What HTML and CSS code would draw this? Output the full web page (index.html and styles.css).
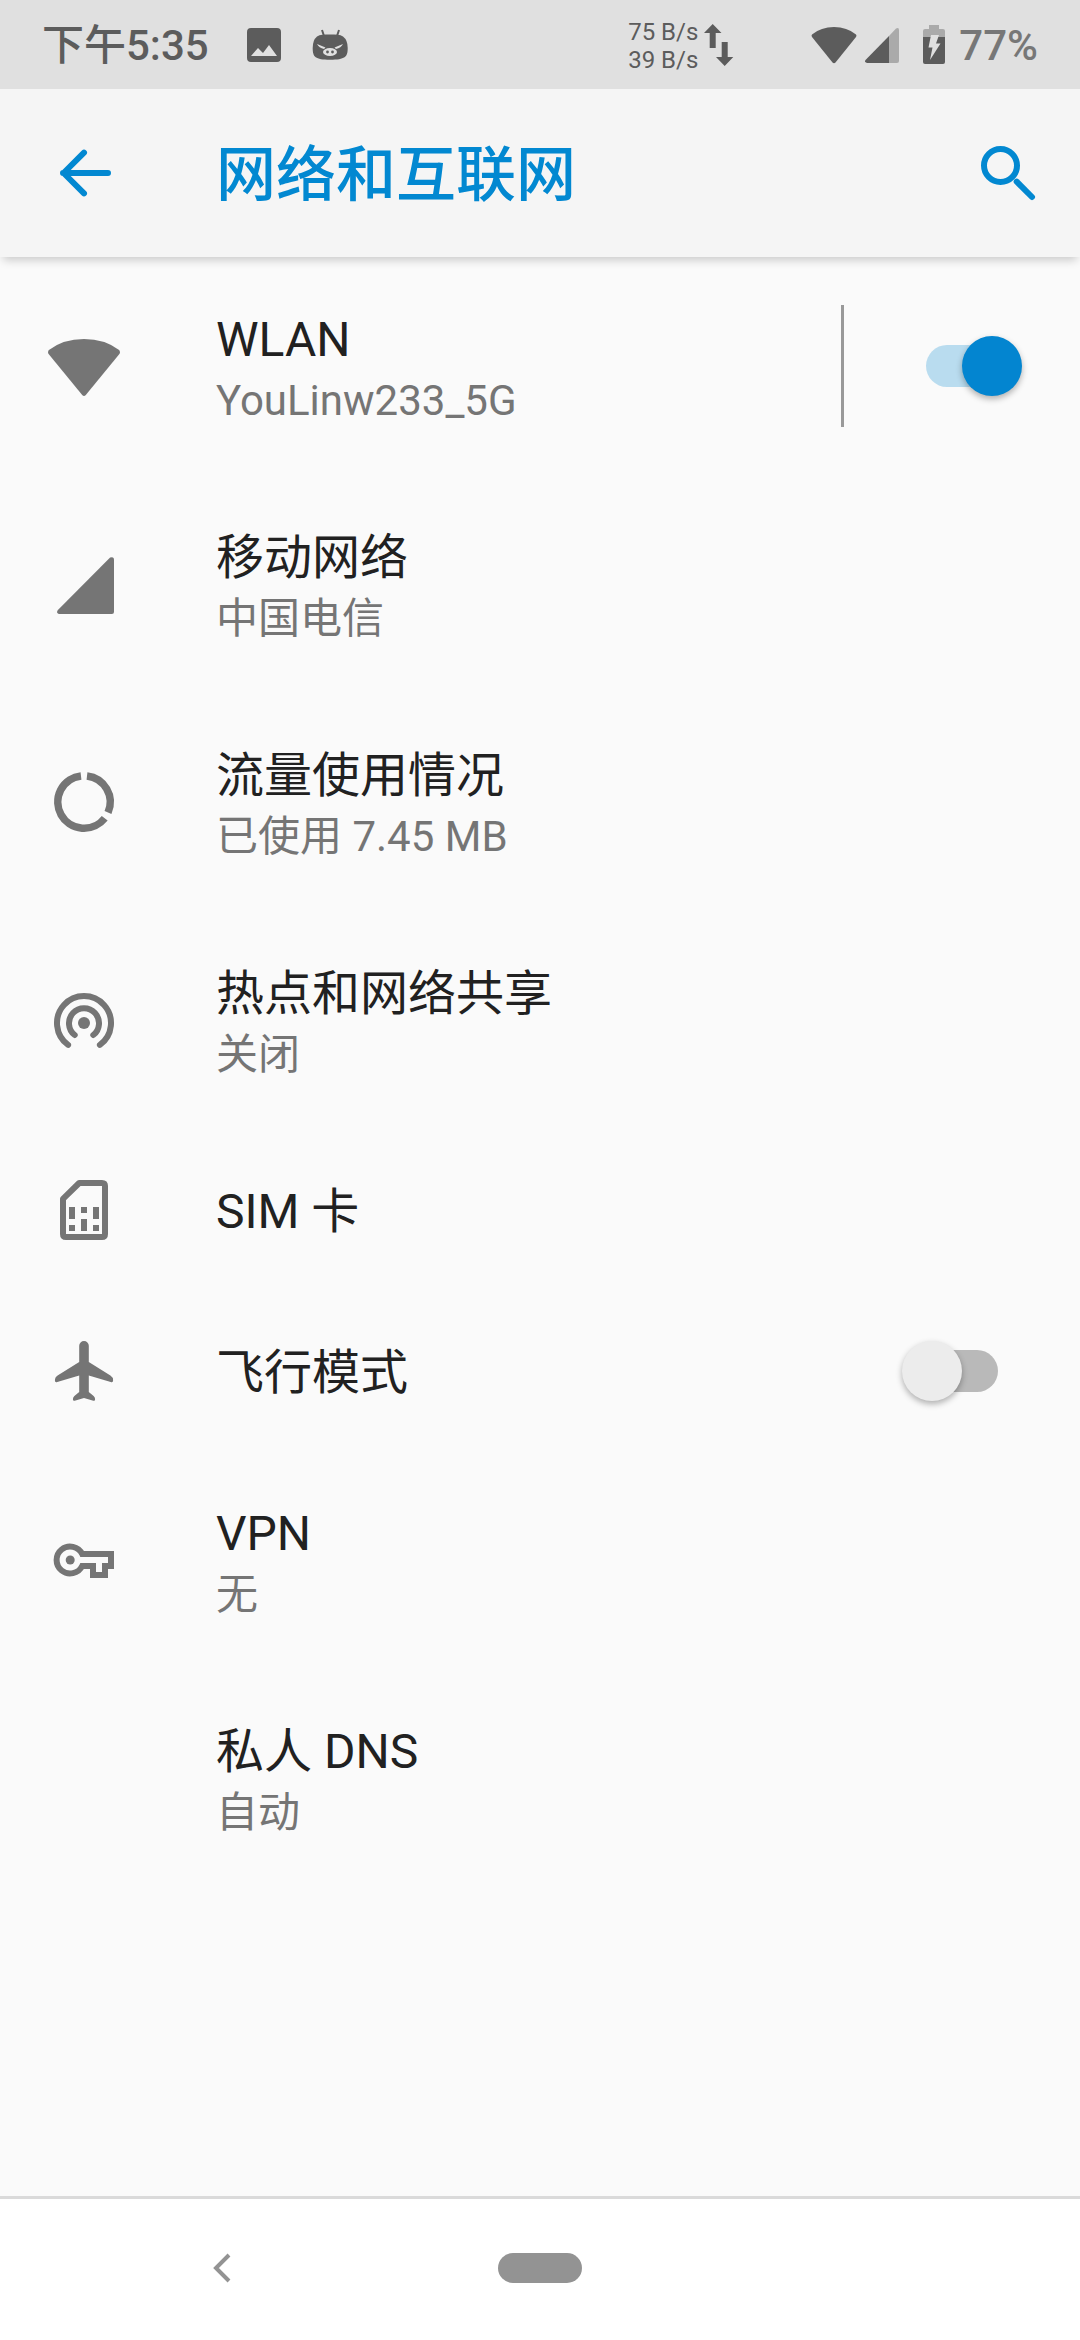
FILE: index.html
```html
<!DOCTYPE html>
<html lang="zh-CN">
<head>
<meta charset="utf-8">
<meta name="viewport" content="width=device-width">
<title>网络和互联网</title>
<link rel="stylesheet" href="styles.css">
</head>
<body>
<div class="status">
  <span class="clock">下午5:35</span>
  <svg class="status-image" viewBox="0 0 34 34" width="34" height="34" aria-hidden="true"><path fill-rule="evenodd" d="M4 0H30a4 4 0 0 1 4 4V30a4 4 0 0 1-4 4H4a4 4 0 0 1-4-4V4a4 4 0 0 1 4-4ZM4 28H30L22 17L16 25L11 20Z"/></svg>
  <svg class="status-pig" viewBox="0 0 36 32" width="36" height="32" aria-hidden="true">
    <path d="M10 1l2 6M27 1l-2 6" class="pig-ear"/>
    <path d="M18 5.500C24 5.500 28 5.500 31 7.500Q35.700 11 35.700 19C35.700 28 33 30.700 18 30.700S.7 28 .7 19Q.7 11 5 7.500C8 5.500 12 5.500 18 5.500Z"/>
    <path class="pig-cut" d="M5 15L13.500 18.500L12 20Q7 19 5 15ZM31 15L22.500 18.500L24 20Q29 19 31 15Z"/>
    <ellipse class="pig-cut" cx="18" cy="23" rx="7" ry="4"/>
    <circle cx="15.500" cy="23" r="1.400"/><circle cx="20.500" cy="23" r="1.400"/>
  </svg>
  <div class="speed"><span>75 B/s</span><span>39 B/s</span></div>
  <svg class="status-arrows" viewBox="0 0 30 42" width="30" height="42" aria-hidden="true"><path d="M8.700 0L17.500 9H11.700V24H5.700V9H0ZM20.700 42L12 33H17.700V18H23.700V33H29.300Z"/></svg>
  <svg class="status-wifi" viewBox="0 0 46 38" width="46" height="38" aria-hidden="true"><path d="M1 8.500Q10 1 23 1T45 8.500Q46 9.500 45 11L24.500 36.500Q23 38 21.500 36.500L1 11Q0 9.500 1 8.500Z"/></svg>
  <svg class="status-signal" viewBox="0 0 34 36" width="34" height="36" aria-hidden="true"><path class="faint" d="M24 9L31 1.500Q34 0 34 3V34Q34 36 32 36H24Z"/><path d="M24 9V36H2Q-1 35 .5 33Z"/></svg>
  <svg class="status-battery" viewBox="0 0 22 39" width="22" height="39" aria-hidden="true"><path class="faint" d="M6 0H16V4H20Q22 4 22 6V12H0V6Q0 4 2 4H6Z"/><path d="M0 12H22V37Q22 39 20 39H2Q0 39 0 37Z"/><path class="bolt" d="M8 10H16L13 18.500H17.500L7 35L9.500 22.500H5.500Z"/></svg>
  <span class="percent">77%</span>
</div>

<header class="appbar">
  <button class="icon-button" type="button" aria-label="返回"><svg viewBox="0 0 24 24" width="72" height="72"><path class="line" d="M20 12H5M12 5.200L5.200 12L12 18.800"/></svg></button>
  <h1>网络和互联网</h1>
  <button class="icon-button" type="button" aria-label="搜索"><svg viewBox="0 0 24 24" width="72" height="72"><circle class="line" cx="9.500" cy="9.500" r="5.500"/><path class="line" d="M14.900 14.900L20 20"/></svg></button>
</header>

<main>
  <ul class="list">
    <li class="row">
      <a class="entry" href="#wlan">
        <svg viewBox="0 0 24 24" width="72" height="72" aria-hidden="true"><path d="M.3 6.700Q5 3 12 3T23.700 6.700Q24.200 7.300 23.800 8L12.600 21.700Q12 22.300 11.400 21.700L.2 8Q-.2 7.300.3 6.700Z"/></svg>
        <span class="text"><span class="title">WLAN</span><span class="sub">YouLinw233_5G</span></span>
      </a>
      <div class="toggle-area split"><input class="switch" type="checkbox" role="switch" aria-label="WLAN" checked></div>
    </li>
    <li class="row">
      <a class="entry" href="#mobile">
        <svg viewBox="0 0 24 24" width="72" height="72" aria-hidden="true"><path d="M20.700 3.200Q22 2.700 22 4V21.300Q22 22 21.300 22H3.600Q2.600 21.700 3.300 20.700Z"/></svg>
        <span class="text"><span class="title">移动网络</span><span class="sub">中国电信</span></span>
      </a>
    </li>
    <li class="row">
      <a class="entry" href="#data">
        <svg viewBox="0 0 24 24" width="72" height="72" aria-hidden="true"><path class="line ring" d="M13 3.310A8.750 8.750 0 0 1 20 15.500M18.900 17.400A8.750 8.750 0 1 1 11 3.310"/></svg>
        <span class="text"><span class="title">流量使用情况</span><span class="sub">已使用 7.45 MB</span></span>
      </a>
    </li>
    <li class="row">
      <a class="entry" href="#hotspot">
        <svg viewBox="0 0 24 24" width="72" height="72" aria-hidden="true"><path class="line" d="M6.700 20.300A9 9 0 1 1 17.300 20.300M8.900 17A5 5 0 1 1 15.100 17"/><circle cx="12" cy="13" r="2"/></svg>
        <span class="text"><span class="title">热点和网络共享</span><span class="sub">关闭</span></span>
      </a>
    </li>
    <li class="row single">
      <a class="entry" href="#sim">
        <svg viewBox="0 0 24 24" width="72" height="72" aria-hidden="true"><path class="line" d="M10.400 3H18Q19 3 19 4V20Q19 21 18 21H6Q5 21 5 20V8.300Z"/><path d="M7 11h2v4H7ZM7 17h2v2H7ZM11 11h2v2H11ZM11 15h2v4H11ZM15 11h2v4H15ZM15 17h2v2H15Z"/></svg>
        <span class="text"><span class="title">SIM 卡</span></span>
      </a>
    </li>
    <li class="row single">
      <label class="entry" for="airplane">
        <svg viewBox="0 0 24 24" width="72" height="72" aria-hidden="true"><path d="M12 2A1.600 1.600 0 0 1 13.600 3.600V9L20.800 13.500Q21.700 14 21.700 15.200 21.700 16 20.900 15.700L13.600 13.500V19L15.200 20.300Q15.700 20.700 15.700 21.400T15.100 21.900L12 21L8.900 21.900Q8.300 22 8.300 21.400T8.800 20.300L10.400 19V13.500L3.100 15.700Q2.300 16 2.300 15.200 2.300 14 3.200 13.500L10.400 9V3.600A1.600 1.600 0 0 1 12 2Z"/></svg>
        <span class="text"><span class="title">飞行模式</span></span>
      </label>
      <div class="toggle-area"><input class="switch" type="checkbox" role="switch" id="airplane"></div>
    </li>
    <li class="row">
      <a class="entry" href="#vpn">
        <svg viewBox="0 0 24 24" width="72" height="72" aria-hidden="true"><path class="line key" d="M11.400 10H21V14H19V17H15V14H11.400A4.500 4.500 0 1 1 11.400 10Z"/><circle cx="7.400" cy="12" r="1.500"/></svg>
        <span class="text"><span class="title">VPN</span><span class="sub">无</span></span>
      </a>
    </li>
    <li class="row">
      <a class="entry no-icon" href="#dns">
        <span class="text"><span class="title">私人 DNS</span><span class="sub">自动</span></span>
      </a>
    </li>
  </ul>
</main>

<nav class="navbar">
  <button type="button" aria-label="后退"><svg viewBox="0 0 18 30" width="18" height="30"><path d="M16 2L3 15L16 28"/></svg></button>
  <button type="button" aria-label="主屏幕"><span class="pill"></span></button>
</nav>
</body>
</html>
```
FILE: styles.css
```css
* { box-sizing: border-box; }

body {
  margin: 0;
  min-height: 100vh;
  display: flex;
  flex-direction: column;
  background: #fafafa;
  color: #212121;
  font-family: Roboto, "Noto Sans CJK SC", sans-serif;
}

svg { display: block; flex: none; fill: currentColor; }
a { color: inherit; text-decoration: none; }
button { padding: 0; border: 0; background: none; color: inherit; }

.line {
  fill: none;
  stroke: currentColor;
  stroke-width: 2;
  stroke-linecap: round;
  stroke-linejoin: round;
}
.ring { stroke-width: 2.5; stroke-linecap: butt; }
.key { stroke-linejoin: miter; }

/* Status bar */
.status {
  height: 89px;
  padding: 0 42px;
  display: flex;
  align-items: center;
  background: #e0e0e0;
  color: #5c5c5c;
}
.clock, .percent { padding-top: 2px; font-size: 42px; line-height: 56px; font-weight: 500; }
.percent { color: #777; margin-left: 14px; }
.status-image { margin-left: 38px; }
.status-pig { margin-left: 31px; }
.pig-ear { stroke: currentColor; stroke-width: 2; }
.pig-cut { fill: #e0e0e0; }
.speed {
  margin-left: auto;
  padding-top: 2px;
  display: flex;
  flex-direction: column;
  font-size: 24px;
  line-height: 28px;
}
.status-arrows { margin-left: 6px; }
.status-wifi { margin-left: 77px; }
.status-signal { margin-left: 8px; }
.status-battery { margin-left: 24px; }
.faint { fill: #aaa; }
.bolt { fill: #e0e0e0; }

/* App bar */
.appbar {
  height: 168px;
  padding: 0 36px 0 48px;
  display: flex;
  align-items: center;
  background: #f5f5f5;
  color: #0288d1;
  box-shadow: 0 6px 9px -3px rgba(0, 0, 0, .2);
}
.appbar h1 {
  flex: 1;
  margin: 0 0 0 96px;
  padding-top: 5px;
  font-size: 60px;
  line-height: 80px;
  font-weight: 500;
}

/* Settings list */
main { flex: 1; }
.list { margin: 0; padding: 0; list-style: none; }
.row { min-height: 218px; display: flex; align-items: center; }
.single { min-height: 161px; }
.entry {
  flex: 1;
  padding-left: 48px;
  display: flex;
  align-items: center;
  gap: 96px;
  color: #757575;
}
.no-icon { padding-left: 216px; }
.text { display: flex; flex-direction: column; }
.single .text { padding-top: 4px; }
.title { font-size: 48px; line-height: 70px; color: #212121; }
.sub { font-size: 42px; line-height: 52px; }

.toggle-area { padding-right: 82px; }
.split {
  height: 122px;
  padding: 0 58px 0 82px;
  display: flex;
  align-items: center;
  border-left: 3px solid #999;
}
.switch {
  appearance: none;
  position: relative;
  display: flex;
  align-items: center;
  width: 96px;
  height: 60px;
  margin: 0;
}
.switch::before {
  content: "";
  width: 84px;
  height: 42px;
  margin-left: 12px;
  border-radius: 21px;
  background: #b9b9b9;
}
.switch::after {
  content: "";
  position: absolute;
  left: 0;
  top: 0;
  width: 60px;
  height: 60px;
  border-radius: 50%;
  background: #ececec;
  box-shadow: 0 3px 6px rgba(0, 0, 0, .3);
}
.switch:checked::before { margin-left: 0; background: #b9dcef; }
.switch:checked::after { left: auto; right: 0; background: #0385d0; }

/* Navigation bar */
.navbar {
  height: 144px;
  padding: 0 63px 3px;
  display: grid;
  grid-template-columns: repeat(3, 1fr);
  border-top: 3px solid #dadada;
  background: #fff;
  color: #939393;
}
.navbar button { display: flex; align-items: center; justify-content: center; }
.navbar path { fill: none; stroke: currentColor; stroke-width: 4; }
.pill { width: 84px; height: 30px; border-radius: 15px; background: currentColor; }
```
